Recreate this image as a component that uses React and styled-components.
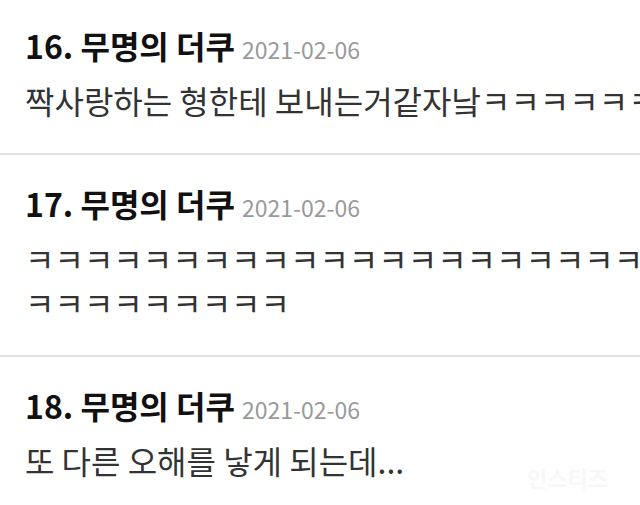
import React from 'react';
import styled, { createGlobalStyle } from 'styled-components';

const GlobalStyle = createGlobalStyle`
  html, body {
    margin: 0;
    padding: 0;
    background: #fff;
    overflow: hidden;
  }
  body {
    font-family: "Noto Sans CJK KR", "Noto Sans", sans-serif;
  }
`;

const comments = [
  {
    no: 16,
    name: '무명의 더쿠',
    date: '2021-02-06',
    lines: [{ text: '짝사랑하는 형한테 보내는거같자낰', laugh: 6 }],
  },
  {
    no: 17,
    name: '무명의 더쿠',
    date: '2021-02-06',
    lines: [
      { text: '', laugh: 22 },
      { text: '', laugh: 9 },
    ],
  },
  {
    no: 18,
    name: '무명의 더쿠',
    date: '2021-02-06',
    lines: [{ text: '또 다른 오해를 낳게 되는데...', laugh: 0 }],
  },
];

const App = () => {
  return (
    <>
      <GlobalStyle />
      <Page>
        <List>
          {comments.map((c) => (
            <Comment key={c.no}>
              <Header>
                <Author>
                  {c.no}. {c.name}
                </Author>
                <DateText>{c.date}</DateText>
              </Header>
              <Body>
                {c.lines.map((line, i) => (
                  <Line key={i}>
                    {line.text}
                    {line.laugh > 0 && 'ㅋ'.repeat(line.laugh)}
                  </Line>
                ))}
              </Body>
            </Comment>
          ))}
        </List>
        <Watermark>인스티즈</Watermark>
      </Page>
    </>
  );
};

const Page = styled.div`
  position: relative;
  width: 640px;
  height: 505px;
  overflow: hidden;
  background: #fff;
`;

const List = styled.ul`
  list-style: none;
  margin: -3px 0 0;
  padding: 0;
`;

const Comment = styled.li`
  padding: 28px 0 31px 25px;
  border-bottom: 2px solid #e1e1e1;
`;

const Header = styled.div`
  display: flex;
  align-items: baseline;
  gap: 7px;
  height: 40px;
  line-height: 40px;
  white-space: nowrap;
`;

const Author = styled.span`
  font-size: 32px;
  font-weight: 700;
  color: #111;
`;

const DateText = styled.span`
  font-size: 23px;
  color: #9a9a9a;
`;

const Body = styled.div`
  margin-top: 13px;
  font-size: 32px;
  line-height: 44px;
  color: #333;
`;

const Line = styled.p`
  margin: 0;
  white-space: nowrap;
  overflow: hidden;
`;

const Watermark = styled.span`
  position: absolute;
  right: 32px;
  bottom: 12px;
  font-size: 22px;
  font-weight: 700;
  color: #f7f7f7;
`;

export default App;
